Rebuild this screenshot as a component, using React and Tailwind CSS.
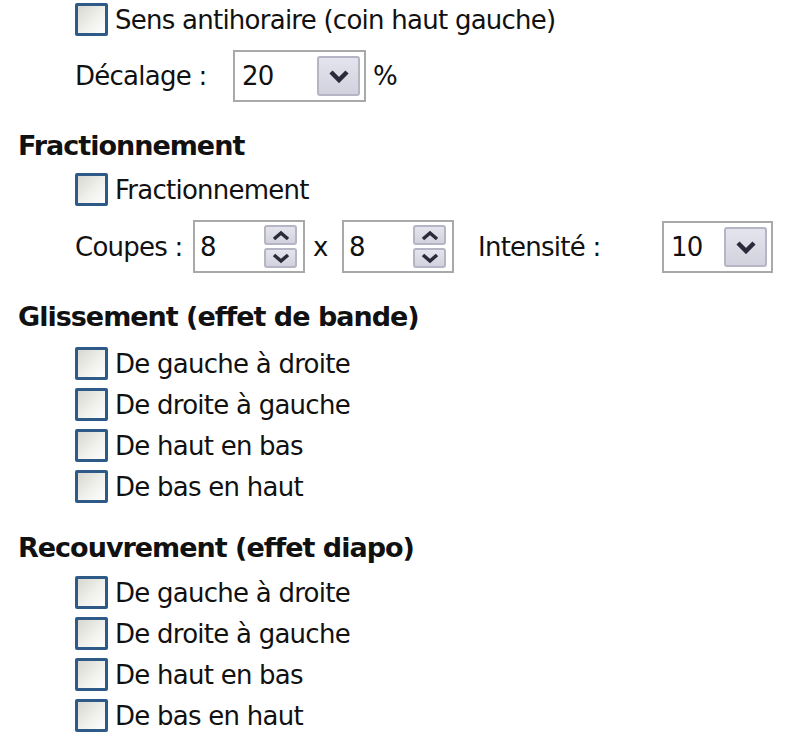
import React from "react";

const font = { fontFamily: '"DejaVu Sans", "Noto Sans", sans-serif' };

function Check({ label }) {
  return (
    <div className="flex items-center h-[33px] gap-[7px]">
      <div className="w-[33px] h-[33px] border-[3px] border-[#2d5a86] rounded-[2px] bg-gradient-to-br from-[#d8d8d0] via-[#eeeeea] to-white shrink-0" />
      <span className="text-[26px] leading-none tracking-[-0.75px] text-[#111]">{label}</span>
    </div>
  );
}

function Chevron() {
  return (
    <svg width="22" height="14" viewBox="0 0 22 14">
      <path d="M3 3 L11 11 L19 3" fill="none" stroke="#2a2a3a" strokeWidth="4.5" strokeLinejoin="miter" />
    </svg>
  );
}

function SmallArrow({ up }) {
  return (
    <svg width="18" height="11" viewBox="0 0 18 11">
      <path
        d={up ? "M2 9 L9 3 L16 9" : "M2 2 L9 8 L16 2"}
        fill="none"
        stroke="#2a2a3a"
        strokeWidth="3.5"
      />
    </svg>
  );
}

function Combo({ value, w }) {
  return (
    <div className={`flex items-center justify-between h-[52px] border-[2px] border-[#a9a9a9] bg-white pl-[7px] pr-[4px] ${w}`}>
      <span className="text-[26px] leading-none tracking-[-0.75px] text-[#111]">{value}</span>
      <div className="w-[43px] h-[40px] border-[2px] border-[#b5b5c6] rounded-[3px] bg-gradient-to-b from-[#e4e4ee] to-[#d2d2de] flex items-center justify-center">
        <Chevron />
      </div>
    </div>
  );
}

function Spin({ value }) {
  return (
    <div className="flex items-center justify-between h-[53px] w-[112px] border-[2px] border-[#a9a9a9] bg-white pl-[5px] pr-[6px]">
      <span className="text-[26px] leading-none text-[#111]">{value}</span>
      <div className="flex flex-col gap-[3px]">
        <div className="w-[33px] h-[20px] border-[2px] border-[#b5b5c6] rounded-[3px] bg-gradient-to-b from-[#e4e4ee] to-[#d2d2de] flex items-center justify-center">
          <SmallArrow up />
        </div>
        <div className="w-[33px] h-[20px] border-[2px] border-[#b5b5c6] rounded-[3px] bg-gradient-to-b from-[#e4e4ee] to-[#d2d2de] flex items-center justify-center">
          <SmallArrow />
        </div>
      </div>
    </div>
  );
}

function Heading({ children, className = "" }) {
  return (
    <div className={`text-[27px] font-bold leading-none tracking-[-1px] text-[#111] pl-[18px] ${className}`}>{children}</div>
  );
}

export default function App() {
  const dirs = ["De gauche à droite", "De droite à gauche", "De haut en bas", "De bas en haut"];
  return (
    <div className="w-[800px] h-[749px] bg-white overflow-hidden" style={font}>
      <div className="pl-[75px] pt-[3px]">
        <Check label="Sens antihoraire (coin haut gauche)" />
        <div className="flex items-center mt-[14px] h-[52px]">
          <span className="text-[26px] leading-none tracking-[-0.75px] text-[#111] w-[158px]">Décalage :</span>
          <Combo value="20" w="w-[133px]" />
          <span className="text-[26px] leading-none text-[#111] ml-[7px]">%</span>
        </div>
      </div>

      <Heading className="mt-[30px]">Fractionnement</Heading>

      <div className="pl-[75px] mt-[14px]">
        <Check label="Fractionnement" />
        <div className="flex items-center mt-[14px] h-[53px]">
          <span className="text-[26px] leading-none tracking-[-0.75px] text-[#111] w-[118px]">Coupes :</span>
          <Spin value="8" />
          <span className="text-[26px] leading-none text-[#111] w-[37px] pl-[8px]">x</span>
          <Spin value="8" />
          <span className="text-[26px] leading-none tracking-[-0.75px] text-[#111] ml-[24px] w-[184px]">Intensité :</span>
          <Combo value="10" w="w-[111px]" />
        </div>
      </div>

      <Heading className="mt-[30px]">Glissement (effet de bande)</Heading>
      <div className="pl-[75px] mt-[17px] flex flex-col gap-[8px]">
        {dirs.map((d) => (
          <Check key={"g" + d} label={d} />
        ))}
      </div>

      <Heading className="mt-[31px]">Recouvrement (effet diapo)</Heading>
      <div className="pl-[75px] mt-[15px] flex flex-col gap-[8px]">
        {dirs.map((d) => (
          <Check key={"r" + d} label={d} />
        ))}
      </div>
    </div>
  );
}
